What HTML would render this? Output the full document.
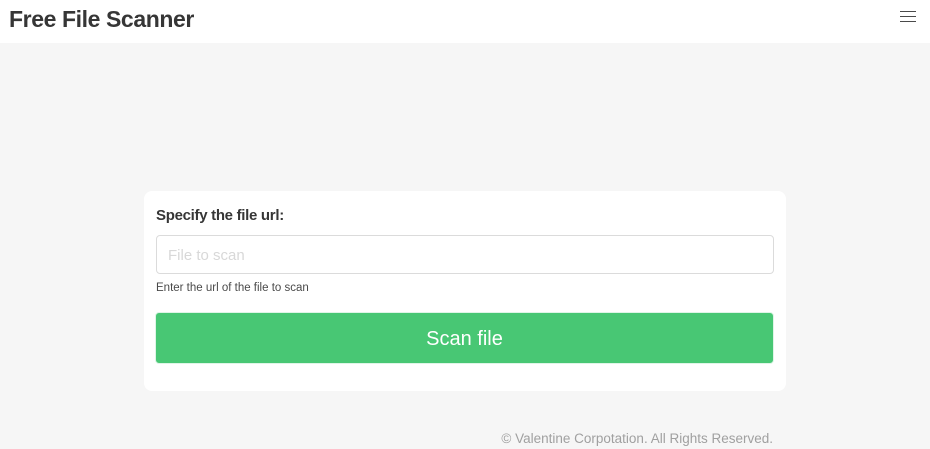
<!DOCTYPE html>
<html><head><style>
body{margin:0;width:930px;height:449px;background:#f6f6f6;font-family:"Liberation Sans",sans-serif;overflow:hidden;position:relative}
.hd{position:absolute;left:0;top:0;width:930px;height:43px;background:#fff}
.t{position:absolute;left:9px;top:6px;font-size:23px;font-weight:bold;color:#363636;letter-spacing:-0.4px}
.hb{position:absolute;left:900px;top:11px;width:16px}
.hb i{display:block;height:1px;background:#4a4a4a;margin-bottom:4px}
.card{position:absolute;left:144px;top:191px;width:642px;height:200px;background:#fff;border-radius:8px}
.lb{position:absolute;left:12px;top:16px;font-size:15px;font-weight:bold;color:#363636;letter-spacing:-0.3px}
.in{position:absolute;left:12px;top:44px;width:616px;height:37px;border:1px solid #dbdbdb;border-radius:4px;font-size:15px;color:#d8d8d8;line-height:40px;text-indent:11px}
.hp{position:absolute;left:12px;top:91px;font-size:11.5px;color:#4a4a4a}
.bt{position:absolute;left:11px;top:121px;width:619px;height:52px;background:#48c774;border:1px solid #dff5e7;box-sizing:border-box;border-radius:4px;color:#fff;font-size:20px;text-align:center;line-height:53px}
.ft{position:absolute;right:157px;top:431px;font-size:13.5px;color:#a0a0a0}
</style></head><body>
<div class="hd"><div class="t">Free File Scanner</div><div class="hb"><i></i><i></i><i></i></div></div>
<div class="card"><div class="lb">Specify the file url:</div><div class="in">File to scan</div><div class="hp">Enter the url of the file to scan</div><div class="bt">Scan file</div></div>
<div class="ft">© Valentine Corpotation. All Rights Reserved.</div>
</body></html>
